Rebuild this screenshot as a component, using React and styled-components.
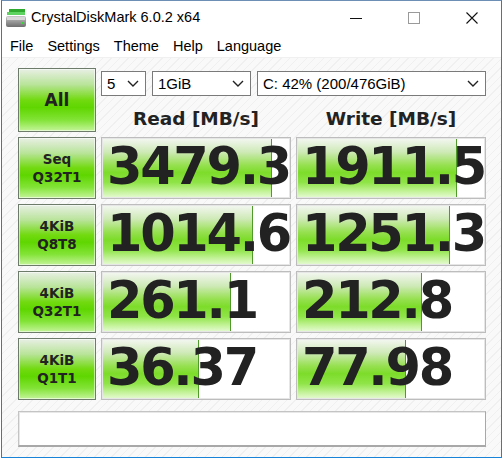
import React from 'react';
import styled, { createGlobalStyle } from 'styled-components';

const GlobalStyle = createGlobalStyle`
  html, body {
    margin: 0;
    padding: 0;
    background: #ffffff;
  }
  body {
    font-family: 'Liberation Sans', Arial, sans-serif;
  }
`;

const rows = [
  { top: 'Seq', bottom: 'Q32T1', read: '3479.3', readBar: 0.895, write: '1911.5', writeBar: 0.842 },
  { top: '4KiB', bottom: 'Q8T8', read: '1014.6', readBar: 0.795, write: '1251.3', writeBar: 0.805 },
  { top: '4KiB', bottom: 'Q32T1', read: '261.1', readBar: 0.674, write: '212.8', writeBar: 0.653 },
  { top: '4KiB', bottom: 'Q1T1', read: '36.37', readBar: 0.505, write: '77.98', writeBar: 0.568 },
];

const DriveIcon = () => (
  <svg width="20" height="20" viewBox="0 0 20 20">
    <defs>
      <linearGradient id="body" x1="0" y1="0" x2="0" y2="1">
        <stop offset="0" stopColor="#c8c8c8" />
        <stop offset="0.5" stopColor="#9a9a9a" />
        <stop offset="1" stopColor="#6e6e6e" />
      </linearGradient>
    </defs>
    <rect x="3" y="1" width="16" height="3" fill="#2faa2f" />
    <rect x="1" y="4" width="18" height="3" fill="#5fd35f" />
    <rect x="0" y="8" width="20" height="11" rx="2" fill="url(#body)" />
    <rect x="1" y="9" width="18" height="3" fill="#d8d8d8" />
    <rect x="15" y="14" width="3" height="2" fill="#39d839" />
  </svg>
);

const Chevron = () => (
  <svg width="12" height="8" viewBox="0 0 12 8">
    <polyline points="1,1 6,6 11,1" fill="none" stroke="#222" strokeWidth="1.4" />
  </svg>
);

const App = () => (
  <>
    <GlobalStyle />
    <Window>
      <TitleBar>
        <IconSlot><DriveIcon /></IconSlot>
        <Title>CrystalDiskMark 6.0.2 x64</Title>
        <Controls>
          <Control>
            <svg width="12" height="12" viewBox="0 0 12 12"><line x1="0" y1="6.5" x2="12" y2="6.5" stroke="#111" strokeWidth="1" /></svg>
          </Control>
          <Control>
            <svg width="12" height="12" viewBox="0 0 12 12"><rect x="0.5" y="0.5" width="11" height="11" fill="none" stroke="#9a9a9a" strokeWidth="1" /></svg>
          </Control>
          <Control>
            <svg width="12" height="12" viewBox="0 0 12 12"><path d="M0.5 0.5 L11.5 11.5 M11.5 0.5 L0.5 11.5" stroke="#111" strokeWidth="1.1" /></svg>
          </Control>
        </Controls>
      </TitleBar>
      <MenuBar>
        {['File', 'Settings', 'Theme', 'Help', 'Language'].map((m) => (
          <MenuItem key={m}>{m}</MenuItem>
        ))}
      </MenuBar>
      <Client>
        <Grid>
          <TestButton $big>All</TestButton>
          <TopArea>
            <Selects>
              <Select $w="45px"><span>5</span><Chevron /></Select>
              <Select $w="99px"><span>1GiB</span><Chevron /></Select>
              <Select $grow><span>C: 42% (200/476GiB)</span><Chevron /></Select>
            </Selects>
            <Headers>
              <Header>Read [MB/s]</Header>
              <Header>Write [MB/s]</Header>
            </Headers>
          </TopArea>
          {rows.map((r, i) => (
            <React.Fragment key={i}>
              <TestButton>
                <span>{r.top}</span>
                <span>{r.bottom}</span>
              </TestButton>
              <Cell>
                <Bar style={{ width: `${r.readBar * 100}%` }} />
                <Value>{r.read}</Value>
              </Cell>
              <Cell>
                <Bar style={{ width: `${r.writeBar * 100}%` }} />
                <Value>{r.write}</Value>
              </Cell>
            </React.Fragment>
          ))}
        </Grid>
        <StatusBar />
      </Client>
    </Window>
  </>
);

const Window = styled.div`
  box-sizing: border-box;
  margin-left: 1px;
  width: 501px;
  height: 458px;
  border: 1px solid #1883d7;
  border-top: 1px solid #6d8fb5;
  background: #ffffff;
  display: flex;
  flex-direction: column;
`;

const TitleBar = styled.div`
  height: 33px;
  display: flex;
  align-items: center;
  background: #ffffff;
`;

const IconSlot = styled.div`
  width: 20px;
  height: 20px;
  margin-left: 4px;
  margin-right: 5px;
  display: flex;
`;

const Title = styled.div`
  flex: 1;
  font-family: 'Liberation Sans', Arial, sans-serif;
  font-size: 14.5px;
  color: #000;
  padding-bottom: 1px;
`;

const Controls = styled.div`
  display: flex;
  height: 100%;
`;

const Control = styled.div`
  width: 58px;
  height: 100%;
  display: flex;
  align-items: center;
  justify-content: center;
`;

const MenuBar = styled.div`
  height: 23px;
  display: flex;
  align-items: center;
  padding-left: 1px;
  border-bottom: 1px solid #f0f0f0;
`;

const MenuItem = styled.div`
  padding: 0 7px;
  font-family: 'Liberation Sans', Arial, sans-serif;
  font-size: 14.5px;
  color: #000;
`;

const Client = styled.div`
  flex: 1;
  padding: 10px 0 0 16px;
  background-color: #f9f9f9;
  background-image: repeating-linear-gradient(
    135deg,
    #f9f9f9 0px,
    #f9f9f9 5px,
    #f0f0f0 5px,
    #f0f0f0 6px
  );
`;

const Grid = styled.div`
  display: grid;
  grid-template-columns: 78px 190px 190px;
  grid-template-rows: 64px repeat(4, 62px);
  column-gap: 5px;
  row-gap: 5px;
`;

const TestButton = styled.div`
  box-sizing: border-box;
  border: 1px solid #6d7b6b;
  box-shadow: inset 0 0 0 1px rgba(255, 255, 255, 0.55);
  background: linear-gradient(
    to bottom,
    #e8efe4 0%,
    #b9e49a 25%,
    #72da10 50%,
    #5fd600 62%,
    #82e336 82%,
    #c4f49a 100%
  );
  display: flex;
  flex-direction: column;
  align-items: center;
  justify-content: center;
  font-family: 'DejaVu Sans', Verdana, sans-serif;
  font-weight: bold;
  font-size: ${({ $big }) => ($big ? '17px' : '13.5px')};
  line-height: 18px;
  color: #222;
`;

const TopArea = styled.div`
  grid-column: 2 / span 2;
  display: flex;
  flex-direction: column;
  padding-top: 3px;
`;

const Selects = styled.div`
  display: flex;
  gap: 6px;
`;

const Select = styled.div`
  box-sizing: border-box;
  height: 25px;
  width: ${({ $w }) => $w || 'auto'};
  flex: ${({ $grow }) => ($grow ? 1 : 'none')};
  background: #ffffff;
  border: 1px solid #7a7a7a;
  display: flex;
  align-items: center;
  justify-content: space-between;
  padding: 0 6px 0 5px;
  font-family: 'Liberation Sans', Arial, sans-serif;
  font-size: 15px;
  color: #000;
`;

const Headers = styled.div`
  flex: 1;
  display: grid;
  grid-template-columns: 190px 190px;
  column-gap: 5px;
  align-items: center;
`;

const Header = styled.div`
  text-align: center;
  font-family: 'DejaVu Sans', Verdana, sans-serif;
  font-weight: bold;
  font-size: 18.5px;
  color: #222;
  padding-top: 8px;
`;

const Cell = styled.div`
  position: relative;
  box-sizing: border-box;
  border: 1px solid #bdbdbd;
  box-shadow: inset 0 0 0 1px #e6e6e6;
  background: #ffffff;
  display: flex;
  align-items: center;
  overflow: hidden;
`;

const Bar = styled.div`
  position: absolute;
  left: 1px;
  top: 1px;
  bottom: 1px;
  border-right: 1px solid #4f9a2a;
  background: linear-gradient(
    to bottom,
    #f2f6ef 0%,
    #cfeab8 22%,
    #96e050 45%,
    #7ddc2a 58%,
    #8fe447 75%,
    #c9f4a2 92%,
    #e2f9cd 100%
  );
`;

const Value = styled.div`
  position: relative;
  padding-left: 5px;
  padding-bottom: 3px;
  font-family: 'DejaVu Sans', Verdana, sans-serif;
  font-weight: bold;
  font-size: 51px;
  letter-spacing: -2.3px;
  line-height: 1;
  color: #222;
  white-space: nowrap;
`;

const StatusBar = styled.div`
  box-sizing: border-box;
  margin-top: 11px;
  width: 468px;
  height: 36px;
  background: #ffffff;
  border: 1px solid #c4c4c4;
  border-right-color: #a8a8a8;
  border-bottom: 2px solid #a8a8a8;
  box-shadow: inset 1px 1px 0 #e8e8e8;
`;

export default App;
